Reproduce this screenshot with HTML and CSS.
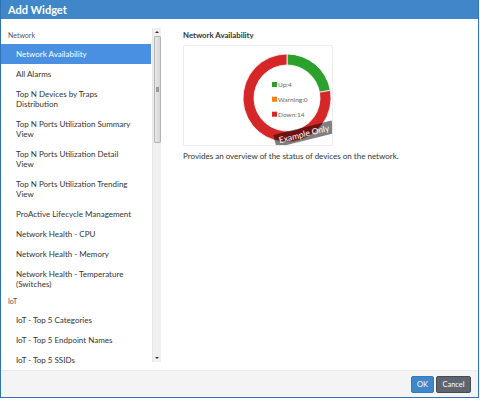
FILE: index.html
```html
<!DOCTYPE html>
<html>
<head>
<meta charset="utf-8">
<link rel="stylesheet" href="styles.css">
</head>
<body>
<div class="dialog">
  <div class="header">Add Widget</div>
  <div class="body">
    <div class="list-wrap">
      <div class="list">
        <div class="group">Network</div>
        <div class="item selected">Network Availability</div>
        <div class="item">All Alarms</div>
        <div class="item">Top N Devices by Traps<br>Distribution</div>
        <div class="item">Top N Ports Utilization Summary<br>View</div>
        <div class="item">Top N Ports Utilization Detail<br>View</div>
        <div class="item">Top N Ports Utilization Trending<br>View</div>
        <div class="item">ProActive Lifecycle Management</div>
        <div class="item">Network Health - CPU</div>
        <div class="item">Network Health - Memory</div>
        <div class="item">Network Health - Temperature<br>(Switches)</div>
        <div class="group">IoT</div>
        <div class="item">IoT - Top 5 Categories</div>
        <div class="item">IoT - Top 5 Endpoint Names</div>
        <div class="item">IoT - Top 5 SSIDs</div>
      </div>
      <div class="scrollbar">
        <div class="sb-btn"><span class="tri-up"></span></div>
        <div class="sb-track">
          <div class="sb-thumb"><span class="grip"></span></div>
        </div>
        <div class="sb-btn"><span class="tri-down"></span></div>
      </div>
    </div>
    <div class="detail">
      <div class="detail-title">Network Availability</div>
      <div class="preview">
        <svg class="chart" width="148" height="99" viewBox="0 0 148 99">
          <path d="M103 8 A44 44 0 0 1 146.33 44.36 L135.5 46.27 A33 33 0 0 0 103 19 Z" fill="#2ca02c" stroke="#fff" stroke-width="0.8"/>
          <path d="M146.33 44.36 A44 44 0 1 1 103 8 L103 19 A33 33 0 1 0 135.5 46.27 Z" fill="#d62728" stroke="#fff" stroke-width="0.8"/>
          <rect x="88" y="36" width="5" height="5" fill="#2ca02c"/>
          <text x="94" y="41" class="legend">Up:4</text>
          <rect x="88" y="50.7" width="5" height="5" fill="#ff7f0e"/>
          <text x="94" y="55.7" class="legend">Warning:0</text>
          <rect x="88" y="65.7" width="5" height="5" fill="#d62728"/>
          <text x="94" y="70.7" class="legend">Down:14</text>
          <g transform="rotate(-14 120 88)">
            <rect x="90" y="81.5" width="60" height="13" fill="rgba(0,0,0,0.5)"/>
            <text x="120" y="91" class="badge" text-anchor="middle">Example Only</text>
          </g>
        </svg>
      </div>
      <div class="desc">Provides an overview of the status of devices on the network.</div>
    </div>
  </div>
  <div class="footer">
    <button class="btn btn-ok">OK</button>
    <button class="btn btn-cancel">Cancel</button>
  </div>
</div>
</body>
</html>
```
FILE: styles.css
```css
html, body {
  margin: 0;
  padding: 0;
  background: #fff;
}
body {
  font-family: Lato, "Open Sans", sans-serif;
  color: #333;
}
.dialog {
  width: 479px;
  height: 398px;
  box-sizing: border-box;
  border: 1px solid #2f72b5;
  border-top: none;
  display: flex;
  flex-direction: column;
  background: #fff;
}
.header {
  height: 19px;
  background: #3f87c8;
  color: #fff;
  font-weight: bold;
  font-size: 11px;
  line-height: 19px;
  padding-left: 7px;
  flex-shrink: 0;
}
.body {
  flex: 1;
  display: flex;
  padding: 9px 0 6px 0;
  min-height: 0;
}
.list-wrap {
  display: flex;
  align-items: flex-start;
  gap: 1px;
  height: 336px;
  flex-shrink: 0;
}
.list {
  width: 150px;
  height: 336px;
  overflow: hidden;
}
.group {
  height: 16px;
  line-height: 15px;
  font-size: 7px;
  color: #555;
  padding-left: 7px;
}
.item {
  padding: 5px 4px 5px 15px;
  line-height: 10px;
  font-size: 8px;
  color: #333;
}
.item.selected {
  background: #4a90e2;
  color: #fff;
}
.scrollbar {
  width: 9px;
  height: 334px;
  display: flex;
  flex-direction: column;
  background: #f0f0f0;
  border-left: 1px solid #e6e6e6;
  box-sizing: border-box;
}
.sb-btn {
  height: 8px;
  display: flex;
  align-items: center;
  justify-content: center;
  flex-shrink: 0;
}
.tri-up {
  width: 0;
  height: 0;
  border-left: 2px solid transparent;
  border-right: 2px solid transparent;
  border-bottom: 2px solid #333;
}
.tri-down {
  width: 0;
  height: 0;
  border-left: 2px solid transparent;
  border-right: 2px solid transparent;
  border-top: 2px solid #333;
}
.sb-track {
  flex: 1;
}
.sb-thumb {
  height: 107px;
  margin: 0 0.5px;
  box-sizing: border-box;
  border: 1px solid #b4b4b4;
  border-radius: 1px;
  background: linear-gradient(to right, #e8e8e8, #d6d6d6);
  display: flex;
  align-items: center;
  justify-content: center;
}
.grip {
  width: 3px;
  height: 5px;
  background: #9a9a9a;
}
.detail {
  margin-left: 22px;
  display: flex;
  flex-direction: column;
}
.detail-title {
  height: 14px;
  line-height: 14px;
  font-size: 7.8px;
  font-weight: bold;
  color: #333;
}
.preview {
  margin-top: 3px;
  width: 150px;
  height: 101px;
  box-sizing: border-box;
  border: 1px solid #ececec;
  border-radius: 2px;
  overflow: hidden;
}
.chart {
  display: block;
}
.legend {
  font-family: Lato, sans-serif;
  font-size: 6.5px;
  fill: #666;
}
.badge {
  font-family: Lato, sans-serif;
  font-size: 8.5px;
  fill: #fff;
}
.desc {
  margin-top: 4px;
  line-height: 12px;
  font-size: 8px;
  color: #333;
}
.footer {
  height: 27px;
  flex-shrink: 0;
  background: #f4f4f4;
  border-top: 1px solid #ececec;
  box-sizing: border-box;
  display: flex;
  align-items: center;
  justify-content: flex-end;
  gap: 2px;
  padding-right: 7px;
}
.btn {
  height: 17px;
  border-radius: 2px;
  font-family: Lato, sans-serif;
  font-size: 7.5px;
  color: #fff;
  padding: 0 5px;
  margin: 0;
  cursor: pointer;
}
.btn-ok {
  background: #3f87c8;
  border: 1px solid #3579b8;
  width: 23px;
}
.btn-cancel {
  background: #5d6670;
  border: 1px solid #444b52;
  width: 35px;
}
```
